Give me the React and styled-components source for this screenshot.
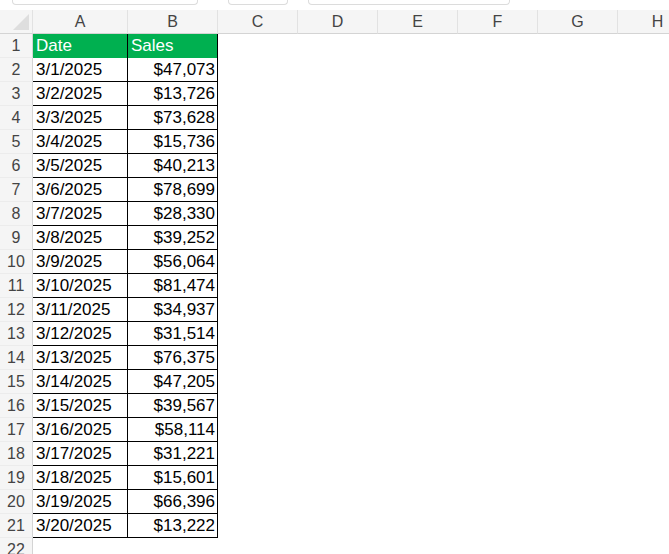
import React from "react";
import styled, { createGlobalStyle } from "styled-components";

const G = createGlobalStyle`
  body { margin:0; background:#fff; font-family:"Liberation Sans",Arial,sans-serif; overflow:hidden; }
`;
const Top = styled.div`height:10px;display:flex;gap:0;background:#fff;position:relative;`;
const TopBar = styled.div`height:4px;margin-left:${p=>p.l}px;width:${p=>p.w}px;border:1px solid #dcdcdc;border-top:none;border-radius:0 0 4px 4px;`;
const Sheet = styled.div`
  display:grid;
  grid-template-columns:33px 95px 90px 80px 80px 80px 80px 80px 80px;
  grid-template-rows:24px repeat(22,24px);
`;
const ColHead = styled.div`
  background:#f5f5f5;border-bottom:1px solid #d4d4d4;border-right:1px solid #e2e2e2;
  color:#444;font-size:16px;display:flex;align-items:center;justify-content:center;
`;
const Corner = styled(ColHead)`position:relative;
  &::after{content:"";position:absolute;right:3px;bottom:3px;border-left:16px solid transparent;border-bottom:16px solid #dedede;}`;
const RowHead = styled.div`
  background:#f5f5f5;border-right:1px solid #d4d4d4;border-bottom:1px solid #ececec;color:#444;font-size:16px;
  display:flex;align-items:center;justify-content:center;
`;
const Cell = styled.div`
  font-size:17px;display:flex;align-items:center;padding:0 2px 0 3px;box-sizing:border-box;white-space:nowrap;
  justify-content:${p=>p.right?"flex-end":"flex-start"};
  background:${p=>p.head?"#00b050":"#fff"};color:${p=>p.head?"#fff":"#000"};
  ${p=>p.bordered?`border-right:1px solid #000;border-bottom:1px solid #000;`:""}
  ${p=>p.head?`border-right:1px solid #000;`:""}
`;

const data=[["3/1/2025","$47,073"],["3/2/2025","$13,726"],["3/3/2025","$73,628"],["3/4/2025","$15,736"],["3/5/2025","$40,213"],["3/6/2025","$78,699"],["3/7/2025","$28,330"],["3/8/2025","$39,252"],["3/9/2025","$56,064"],["3/10/2025","$81,474"],["3/11/2025","$34,937"],["3/12/2025","$31,514"],["3/13/2025","$76,375"],["3/14/2025","$47,205"],["3/15/2025","$39,567"],["3/16/2025","$58,114"],["3/17/2025","$31,221"],["3/18/2025","$15,601"],["3/19/2025","$66,396"],["3/20/2025","$13,222"]];
const cols=["A","B","C","D","E","F","G","H"];

export default function App(){
  const rows=[["Date","Sales",true],...data.map(d=>[d[0],d[1],false])];
  return <>
    <G/>
    <Top><TopBar l={12} w={184}/><TopBar l={30} w={58}/><TopBar l={20} w={200}/></Top>
    <Sheet>
      <Corner/>
      {cols.map(c=><ColHead key={c}>{c}</ColHead>)}
      {rows.map((r,i)=><React.Fragment key={i}>
        <RowHead>{i+1}</RowHead>
        <Cell head={r[2]} bordered={!r[2]}>{r[0]}</Cell>
        <Cell head={r[2]} bordered={!r[2]} right={!r[2]}>{r[1]}</Cell>
        {cols.slice(2).map(c=><Cell key={c}/>)}
      </React.Fragment>)}
      <RowHead>22</RowHead>
    </Sheet>
  </>;
}
